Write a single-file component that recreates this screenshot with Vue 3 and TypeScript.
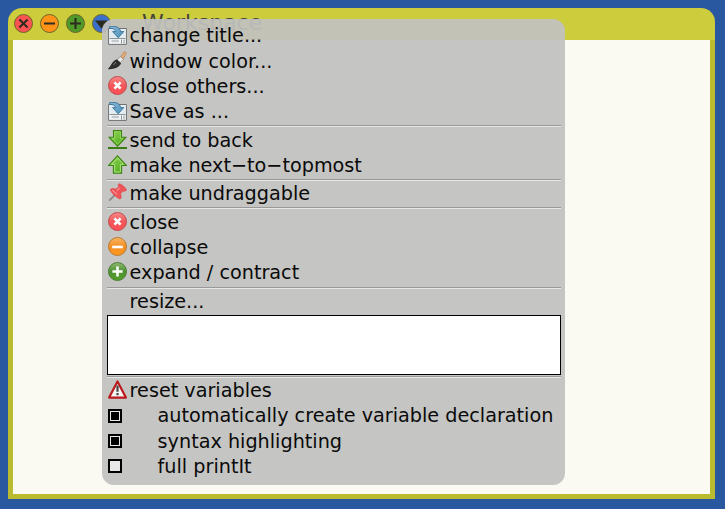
<script setup lang="ts">
type Icon = 'save' | 'brush' | 'cancel' | 'down' | 'up' | 'pin' | 'minus' | 'plus' | 'warn' | 'none'
interface Item { label: string; icon?: Icon; checked?: boolean }

const groups: Item[][] = [
  [
    { label: 'change title...', icon: 'save' },
    { label: 'window color...', icon: 'brush' },
    { label: 'close others...', icon: 'cancel' },
    { label: 'Save as ...', icon: 'save' },
  ],
  [
    { label: 'send to back', icon: 'down' },
    { label: 'make next−to−topmost', icon: 'up' },
  ],
  [{ label: 'make undraggable', icon: 'pin' }],
  [
    { label: 'close', icon: 'cancel' },
    { label: 'collapse', icon: 'minus' },
    { label: 'expand / contract', icon: 'plus' },
  ],
  [{ label: 'resize...', icon: 'none' }],
]

const options: Item[] = [
  { label: 'reset variables', icon: 'warn' },
  { label: 'automatically create variable declaration', checked: true },
  { label: 'syntax highlighting', checked: true },
  { label: 'full printIt', checked: false },
]

const sections = [...groups, options]
const controls = [
  { name: 'close', fill: '#ff5353', d: 'M5.4 5.4 13.6 13.6M13.6 5.4 5.4 13.6' },
  { name: 'collapse', fill: '#ff9318', d: 'M4 9.5H15' },
  { name: 'expand', fill: '#4f9a28', d: 'M4 9.5H15M9.5 4V15' },
  { name: 'menu', fill: '#3a70cc', d: 'M5.2 7.6H13.8L9.5 13Z' },
]
</script>

<template>
  <main class="desktop">
    <section class="window">
      <header class="titlebar">
        <div class="controls">
          <svg v-for="c in controls" :key="c.name" class="control" viewBox="0 0 19 19">
            <circle cx="9.5" cy="9.5" r="9" :fill="c.fill" stroke="#6a6428" />
            <path :d="c.d" :fill="c.name === 'menu' ? '#222' : 'none'" stroke="#2c2c20" stroke-width="2.1" />
          </svg>
        </div>
        <h1 class="title">Workspace</h1>
      </header>
      <div class="content"></div>
    </section>

    <nav class="menu">
      <svg class="defs" width="0" height="0">
        <defs>
          <linearGradient id="gr" x1="0" y1="0" x2="0" y2="1"><stop offset="0" stop-color="#f98a8a" /><stop offset=".5" stop-color="#f0585b" /><stop offset="1" stop-color="#ff5055" /></linearGradient>
          <linearGradient id="go" x1="0" y1="0" x2="0" y2="1"><stop offset="0" stop-color="#f8b564" /><stop offset=".5" stop-color="#f39026" /><stop offset="1" stop-color="#ff981c" /></linearGradient>
          <linearGradient id="gg" x1="0" y1="0" x2="0" y2="1"><stop offset="0" stop-color="#8fba74" /><stop offset=".5" stop-color="#4f9232" /><stop offset="1" stop-color="#55a028" /></linearGradient>
          <linearGradient id="ga" x1="0" y1="0" x2="1" y2="1"><stop offset="0" stop-color="#94d858" /><stop offset="1" stop-color="#45a512" /></linearGradient>
          <linearGradient id="gb" x1="0" y1="0" x2="1" y2="1"><stop offset="0" stop-color="#8dbbd8" /><stop offset="1" stop-color="#4a8fba" /></linearGradient>
        </defs>
      </svg>
      <template v-for="(section, s) in sections" :key="s">
        <div v-if="s === sections.length - 1" class="field"></div>
        <hr v-if="s > 0" class="rule" />
        <ul class="group">
          <li v-for="item in section" :key="item.label" class="item" :class="{ option: item.checked !== undefined, plain: item.icon === 'none' }">
            <span v-if="item.checked !== undefined" class="check" :class="{ on: item.checked }"></span>
            <svg v-else class="icon" viewBox="0 0 19 19">
              <g v-if="item.icon === 'save'">
                <path d="M.6 2.5H18.4V18.4H.6Z" fill="#f4f6f7" stroke="#6b7174" />
                <path d="M2 3.5H17V12H2Z" fill="#e2ebf0" />
                <path d="M1.5 12.5H17.5" stroke="#8c969a" />
                <path d="M3.5 15H11" stroke="#c2c8cb" stroke-width="2.4" />
                <path d="M13.5 13.5V17.5M16 13.5V17.5" stroke="#8d9294" />
                <path d="M1.6.7C7.4-.3 12 1.1 12.6 5.6H15.8L10.2 11.8 4.6 5.6H7.8C7.4 3.5 5.2 2.3 1.6 2.4Z" fill="url(#gb)" stroke="#35739a" stroke-width=".9" />
              </g>
              <g v-else-if="item.icon === 'brush'">
                <path d="M12.2 6 16.1.8C17 .2 18.8 1.7 18.3 2.7L15 8.3Z" fill="#dfa977" stroke="#a77b52" stroke-width=".5" />
                <path d="M9.1 9 12.2 5.4 15.4 8.3 12.4 11.7Z" fill="#e9e9e5" stroke="#85857f" stroke-width=".7" />
                <path d="M8.6 8.8 12.6 12.2C11.5 16 6 17.6.5 17.8 3.2 15.8 4.2 10.2 8.6 8.8Z" fill="#2e302d" stroke="#1c1e1b" stroke-width=".8" />
                <path d="M5.8 13.8 8 11" stroke="#999" stroke-width=".8" />
              </g>
              <g v-else-if="item.icon === 'cancel' || item.icon === 'minus' || item.icon === 'plus'">
                <circle cx="9.5" cy="9.5" r="9" :fill="item.icon === 'cancel' ? 'url(#gr)' : item.icon === 'minus' ? 'url(#go)' : 'url(#gg)'" :stroke="item.icon === 'cancel' ? '#c0494d' : item.icon === 'minus' ? '#bd7a2f' : '#477d30'" />
                <path v-if="item.icon === 'cancel'" d="M6.4 6.4 12.6 12.6M12.6 6.4 6.4 12.6" stroke="#fff" stroke-width="2.7" />
                <path v-else-if="item.icon === 'minus'" d="M4.2 10H14.8" stroke="#fff" stroke-width="2.6" />
                <path v-else d="M4.4 9.5H14.6M9.5 4.4V14.6" stroke="#fff" stroke-width="2.6" />
              </g>
              <g v-else-if="item.icon === 'down'">
                <path d="M5.5.6H13.5V7.2H18L9.5 16.2 1 7.2H5.5Z" fill="url(#ga)" stroke="#3c8414" stroke-width="1.1" />
                <path d="M6.7 1.8H12.3V8.4H15L9.5 14.3 4 8.4H6.7Z" fill="none" stroke="#a5de74" stroke-width=".7" />
                <path d="M0 18H19" stroke="#327909" stroke-width="1.9" />
              </g>
              <g v-else-if="item.icon === 'up'">
                <path d="M9.5.8 18.4 10.5H13.6V18.3H5.4V10.5H.6Z" fill="url(#ga)" stroke="#3c8414" stroke-width="1.1" />
                <path d="M9.5 2.7 15.5 9.3H12.4V17H6.6V9.3H3.5Z" fill="none" stroke="#b4e68a" stroke-width=".9" />
              </g>
              <g v-else-if="item.icon === 'pin'">
                <path d="M1.2 17.6 8 10.8" stroke="#888" stroke-width="1.8" />
                <path d="M10.8 .9C12.4.2 18.6 5.1 18.3 7.2 17.4 8.6 15.6 8 15 8.1L12.4 11C13.7 13.6 13.6 15.5 12 15.9 9.3 15.2 3 9.9 2.4 6.7 3 5 6 5.4 8 6.2L10.6 3.8C10.2 2.8 10 1.6 10.8.9Z" fill="#ee5357" stroke="#e1474c" stroke-width=".7" />
                <path d="M11.6 5 9 7.6M4.2 7.2 9 11.4" stroke="#ff9797" stroke-width="1.1" />
              </g>
              <g v-else-if="item.icon === 'warn'">
                <path d="M9.5 1.4 17.9 17.6H1.1Z" fill="#f5f5f3" stroke="#bb1a1e" stroke-width="2.2" stroke-linejoin="round" />
                <path d="M9.5 5.6V11.8M9.5 13V15.2" stroke="#454545" stroke-width="2.2" />
              </g>
            </svg>
            <span class="label">{{ item.label }}</span>
          </li>
        </ul>
      </template>
    </nav>
  </main>
</template>

<style>
body { margin: 0; background: #2a58a0; }
</style>

<style scoped>
.desktop { position: relative; box-sizing: border-box; width: 725px; height: 509px; padding: 8px 10px 10px 8px; background: #2a58a0; font-family: "DejaVu Sans", sans-serif; overflow: hidden; }
.window { display: flex; flex-direction: column; height: 491px; border-radius: 14px 14px 0 0; overflow: hidden; }
.titlebar { display: flex; align-items: flex-start; height: 32px; background: #cccc3c; }
.controls { display: flex; gap: 7px; padding: 6px 0 0 6px; }
.control { display: block; width: 19px; height: 19px; }
.title { margin: 0 0 0 31px; color: #44443a; font-size: 22px; font-weight: 400; line-height: 30px; }
.content { flex: 1; background: #fafaf2; border: solid #bbbb2f; border-width: 0 5px 5px; }
.menu { position: absolute; left: 102px; top: 19px; box-sizing: border-box; width: 463px; height: 466px; padding: 4.3px 4px 0 5px; border-radius: 12px; background: rgba(193, 193, 191, .93); }
.defs { position: absolute; }
.group { margin: 0; padding: 0; list-style: none; }
.item { display: flex; align-items: center; gap: 2.6px; height: 25.3px; padding-left: 1px; color: #0a0a0a; font-size: 19.22px; line-height: 25px; white-space: pre; }
.icon { display: block; flex: none; width: 19px; height: 19px; margin-bottom: 1.6px; }
.option { gap: 35.6px; }
.check { box-sizing: border-box; flex: none; width: 14px; height: 14px; border: 2px solid #000; background: #e8e8e8; }
.check.on { background: #000; box-shadow: inset 0 0 0 1px #e8e8e8; }
.rule { height: 1px; margin: 1px 0 0; border: 0; border-top: 1px solid #999; background: #e6e6e6; }
.rule:has(+ .group > .plain) { margin-top: 1.8px; }
.field { box-sizing: border-box; height: 60px; margin-top: .6px; border: 1px solid #000; background: #fff; }
</style>
